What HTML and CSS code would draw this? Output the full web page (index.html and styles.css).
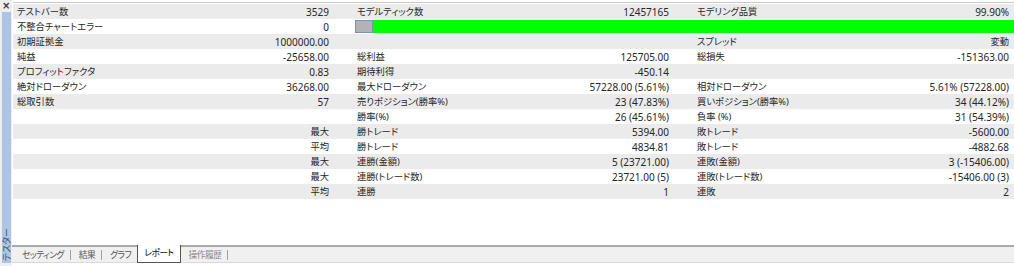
FILE: index.html
```html
<!DOCTYPE html>
<html lang="ja">
<head>
<meta charset="utf-8">
<link rel="stylesheet" href="styles.css">
</head>
<body>
<div class="app">
  <div class="side">
    <div class="close">×</div>
    <div class="strip"><span class="vtext">テスター</span></div>
  </div>
  <div class="main">
    <div class="report">
      <div class="table">
        <div class="row g"><div class="l">テストバー数</div><div class="v">3529</div><div class="l">モデルティック数</div><div class="v">12457165</div><div class="l">モデリング品質</div><div class="v">99.90%</div></div>
        <div class="row"><div class="l">不整合チャートエラー</div><div class="v">0</div><div class="bar"><span class="knob"></span><span class="fill"></span></div></div>
        <div class="row g"><div class="l">初期証拠金</div><div class="v">1000000.00</div><div class="l"></div><div class="v"></div><div class="l">スプレッド</div><div class="v k">変動</div></div>
        <div class="row"><div class="l">純益</div><div class="v">-25658.00</div><div class="l">総利益</div><div class="v">125705.00</div><div class="l">総損失</div><div class="v">-151363.00</div></div>
        <div class="row g"><div class="l">プロフィットファクタ</div><div class="v">0.83</div><div class="l">期待利得</div><div class="v">-450.14</div><div class="l"></div><div class="v"></div></div>
        <div class="row"><div class="l">絶対ドローダウン</div><div class="v">36268.00</div><div class="l">最大ドローダウン</div><div class="v">57228.00 (5.61%)</div><div class="l">相対ドローダウン</div><div class="v">5.61% (57228.00)</div></div>
        <div class="row g"><div class="l">総取引数</div><div class="v">57</div><div class="l">売りポジション(勝率%)</div><div class="v">23 (47.83%)</div><div class="l">買いポジション(勝率%)</div><div class="v">34 (44.12%)</div></div>
        <div class="row"><div class="l"></div><div class="v"></div><div class="l">勝率(%)</div><div class="v">26 (45.61%)</div><div class="l">負率 (%)</div><div class="v">31 (54.39%)</div></div>
        <div class="row g"><div class="l"></div><div class="v k">最大</div><div class="l">勝トレード</div><div class="v">5394.00</div><div class="l">敗トレード</div><div class="v">-5600.00</div></div>
        <div class="row"><div class="l"></div><div class="v k">平均</div><div class="l">勝トレード</div><div class="v">4834.81</div><div class="l">敗トレード</div><div class="v">-4882.68</div></div>
        <div class="row g"><div class="l"></div><div class="v k">最大</div><div class="l">連勝(金額)</div><div class="v">5 (23721.00)</div><div class="l">連敗(金額)</div><div class="v">3 (-15406.00)</div></div>
        <div class="row"><div class="l"></div><div class="v k">最大</div><div class="l">連勝(トレード数)</div><div class="v">23721.00 (5)</div><div class="l">連敗(トレード数)</div><div class="v">-15406.00 (3)</div></div>
        <div class="row g"><div class="l"></div><div class="v k">平均</div><div class="l">連勝</div><div class="v">1</div><div class="l">連敗</div><div class="v">2</div></div>
      </div>
    </div>
    <div class="tabs">
      <div class="tab sep">セッティング</div>
      <div class="tab sep">結果</div>
      <div class="tab">グラフ</div>
      <div class="tab active">レポート</div>
      <div class="tab sep dim">操作履歴</div>
    </div>
  </div>
</div>
</body>
</html>
```
FILE: styles.css
```css
html, body {
  margin: 0;
  padding: 0;
  background: #ffffff;
}
body {
  width: 1014px;
  height: 266px;
  overflow: hidden;
  font-family: "Noto Sans", "Noto Sans CJK JP", sans-serif;
  font-size: 10px;
  color: #262626;
  font-feature-settings: "palt";
}
.app {
  display: flex;
  height: 266px;
}
.side {
  width: 12px;
  flex: none;
  display: flex;
  flex-direction: column;
  background: #eeeeee;
}
.close {
  height: 12px;
  font-size: 10px;
  line-height: 11px;
  font-weight: bold;
  padding-left: 2px;
  color: #333;
  font-family: "DejaVu Sans", sans-serif;
}
.strip {
  margin: 0 1px 3px 2px;
  flex: 1;
  background: #adc5e4;
  display: flex;
  flex-direction: column;
  justify-content: flex-end;
  align-items: center;
}
.vtext {
  writing-mode: vertical-rl;
  text-orientation: sideways;
  transform: rotate(180deg);
  font-size: 9px;
  line-height: 9px;
  color: #3d4f66;
  padding-top: 2px;
  font-family: "Noto Sans CJK JP", sans-serif;
}
.main {
  flex: 1;
  display: flex;
  flex-direction: column;
  min-width: 0;
}
.report {
  flex: 1;
  padding: 2px 3px 0 1px;
  overflow: hidden;
}
.table {
  border-top: 1px solid #c9c9c9;
  padding-top: 1px;
  width: 1020px;
}
.row {
  display: grid;
  grid-template-columns: repeat(6, 170px);
  height: 15px;
  line-height: 15px;
  background: #ffffff;
}
.row.g {
  background: #ebebeb;
}
.l {
  padding-left: 4px;
  white-space: nowrap;
  font-size: 9.3px;
  line-height: 16px;
}
.v {
  text-align: right;
  padding-right: 24px;
  white-space: nowrap;
  line-height: 16px;
}
.v.k {
  font-size: 9.3px;
}
.bar {
  grid-column: 3 / 7;
  display: flex;
  align-items: center;
  padding-left: 2px;
  height: 15px;
}
.knob {
  width: 16px;
  height: 11px;
  background: #b3b3b3;
  border: 1px solid #7d93ab;
  flex: none;
}
.fill {
  flex: 1;
  height: 13px;
  background: #00ff00;
}
.tabs {
  flex: none;
  height: 15px;
  border-top: 2px solid #a9a9a9;
  border-bottom: 1px solid #dadada;
  background: #f0f0f0;
  margin-bottom: 3px;
  display: flex;
  align-items: center;
  padding-left: 2px;
  color: #555;
}
.tab {
  padding: 0 6px 0 8px;
  line-height: 10px;
  font-size: 8.8px;
  letter-spacing: -0.6px;
}
.tab.sep {
  border-right: 1px solid #a0a0a0;
}
.tab.active {
  align-self: flex-start;
  margin-top: -2px;
  height: 17px;
  line-height: 17px;
  background: #ffffff;
  border: 1px solid #555;
  border-top: 0;
  color: #111;
  padding: 0 6px;
}
.tab.dim {
  color: #8a8a8a;
}
```
